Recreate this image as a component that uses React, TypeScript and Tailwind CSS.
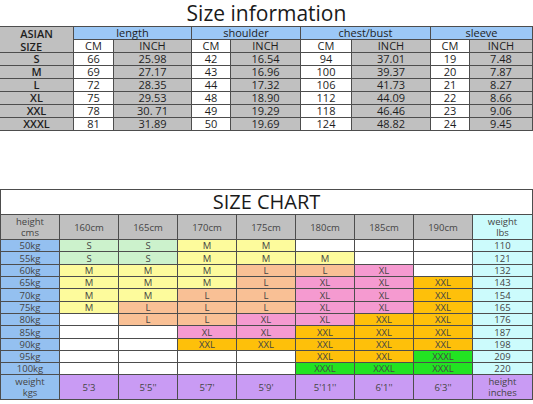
import React from "react";

const font = { fontFamily: '"Open Sans", "Liberation Sans", sans-serif' };

const topRows = [
  ["S", "66", "25.98", "42", "16.54", "94", "37.01", "19", "7.48"],
  ["M", "69", "27.17", "43", "16.96", "100", "39.37", "20", "7.87"],
  ["L", "72", "28.35", "44", "17.32", "106", "41.73", "21", "8.27"],
  ["XL", "75", "29.53", "48", "18.90", "112", "44.09", "22", "8.66"],
  ["XXL", "78", "30. 71", "49", "19.29", "118", "46.46", "23", "9.06"],
  ["XXXL", "81", "31.89", "50", "19.69", "124", "48.82", "24", "9.45"],
];

const chart: [string, string[], string][] = [
  ["50kg", ["S", "S", "M", "M", "", "", ""], "110"],
  ["55kg", ["S", "S", "M", "M", "M", "", ""], "121"],
  ["60kg", ["M", "M", "M", "L", "L", "XL", ""], "132"],
  ["65kg", ["M", "M", "M", "L", "XL", "XL", "XXL"], "143"],
  ["70kg", ["M", "M", "L", "L", "XL", "XL", "XXL"], "154"],
  ["75kg", ["M", "L", "L", "L", "XL", "XL", "XXL"], "165"],
  ["80kg", ["", "L", "L", "XL", "XL", "XXL", "XXL"], "176"],
  ["85kg", ["", "", "XL", "XL", "XXL", "XXL", "XXL"], "187"],
  ["90kg", ["", "", "XXL", "XXL", "XXL", "XXL", "XXL"], "198"],
  ["95kg", ["", "", "", "", "XXL", "XXL", "XXXL"], "209"],
  ["100kg", ["", "", "", "", "XXXL", "XXXL", "XXXL"], "220"],
];

const sizeBg: Record<string, string> = {
  "": "bg-white",
  S: "bg-[#ccf2cc]",
  M: "bg-[#fdfb9c]",
  L: "bg-[#f9c095]",
  XL: "bg-[#f59ad0]",
  XXL: "bg-[#fec00a]",
  XXXL: "bg-[#22e322]",
};

const heights = ["160cm", "165cm", "170cm", "175cm", "180cm", "185cm", "190cm"];
const inches = ["5'3", "5'5''", "5'7'", "5'9'", "5'11''", "6'1''", "6'3''"];

function TopCell({
  children,
  className = "",
}: {
  children?: React.ReactNode;
  className?: string;
}) {
  return (
    <div
      className={`flex items-center justify-center text-[11px] leading-[12px] text-[#1e1e1e] whitespace-pre ${className}`}
    >
      {children}
    </div>
  );
}

function ChartCell({
  children,
  className = "",
}: {
  children?: React.ReactNode;
  className?: string;
}) {
  return (
    <div
      className={`flex items-center justify-center text-center text-[9.5px] leading-[11px] text-[#454545] whitespace-pre ${className}`}
    >
      {children}
    </div>
  );
}

export default function App() {
  return (
    <div className="w-[533px] h-[404px] bg-white overflow-hidden" style={font}>
      <div className="h-[26px] flex items-center justify-center text-[21px] leading-[25px] text-[#1a1a1a]">
        Size information
      </div>
      <div className="grid grid-cols-[73px_39px_77px_38px_69px_50px_78px_38px_62px] grid-rows-[repeat(8,12px)] gap-px bg-[#4d4d4d] border-y border-r border-[#4d4d4d]">
        <TopCell className="row-span-2 bg-[#c0c0c0] font-semibold leading-[13px]">
          {"ASIAN\nSIZE"}
        </TopCell>
        <TopCell className="col-span-2 bg-[#9cc8f6]">length</TopCell>
        <TopCell className="col-span-2 bg-[#9cc8f6]">shoulder</TopCell>
        <TopCell className="col-span-2 bg-[#9cc8f6]">chest/bust</TopCell>
        <TopCell className="col-span-2 bg-[#9cc8f6]">sleeve</TopCell>
        {[0, 1, 2, 3].map((i) => (
          <React.Fragment key={i}>
            <TopCell className="bg-white font-medium">CM</TopCell>
            <TopCell className="bg-[#c0c0c0] font-medium">INCH</TopCell>
          </React.Fragment>
        ))}
        {topRows.map((r) =>
          r.map((v, j) => (
            <TopCell
              key={r[0] + j}
              className={
                j === 0
                  ? "bg-[#c0c0c0] font-semibold"
                  : j % 2 === 1
                  ? "bg-white"
                  : "bg-[#c0c0c0]"
              }
            >
              {v}
            </TopCell>
          ))
        )}
      </div>

      <div className="mt-[58px] border border-[#4d4d4d]">
        <div className="h-[24px] flex items-center justify-center text-[20px] leading-[24px] text-[#1a1a1a]">
          SIZE CHART
        </div>
        <div className="grid grid-cols-[58px_58px_58px_58px_58px_58px_58px_58px_59px] grid-rows-[24px_11px_12px_11px_11px_12px_11px_11px_12px_11px_11px_11px_24px] gap-px bg-[#4d4d4d] border-t border-[#4d4d4d]">
          <ChartCell className="bg-[#c0c0c0]">{"height\ncms"}</ChartCell>
          {heights.map((h) => (
            <ChartCell key={h} className="bg-[#c0c0c0]">
              {h}
            </ChartCell>
          ))}
          <ChartCell className="bg-[#ccfbfc]">{"weight\nlbs"}</ChartCell>
          {chart.map(([kg, sizes, lbs]) => (
            <React.Fragment key={kg}>
              <ChartCell className="bg-[#94c0f0] text-[#2d3d55]">{kg}</ChartCell>
              {sizes.map((s, i) => (
                <ChartCell key={i} className={sizeBg[s]}>
                  {s}
                </ChartCell>
              ))}
              <ChartCell className="bg-[#ccfbfc] text-[#333]">{lbs}</ChartCell>
            </React.Fragment>
          ))}
          <ChartCell className="bg-[#94c0f0] text-[#2d3d55]">{"weight\nkgs"}</ChartCell>
          {inches.map((h) => (
            <ChartCell key={h} className="bg-[#c99bf4]">
              {h}
            </ChartCell>
          ))}
          <ChartCell className="bg-[#c99bf4]">{"height\ninches"}</ChartCell>
        </div>
      </div>
    </div>
  );
}
